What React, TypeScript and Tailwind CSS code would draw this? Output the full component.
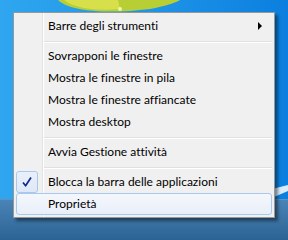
import React from "react";

const font = { fontFamily: 'Lato, "Noto Sans", "Liberation Sans", sans-serif' };

function Sep() {
  return (
    <div className="h-[8px] pl-[28px] pt-[4px]">
      <div className="h-px bg-[#e0e0e0]" />
      <div className="h-px bg-white" />
    </div>
  );
}

function Item({ label, arrow, checked, hover }: { label: string; arrow?: boolean; checked?: boolean; hover?: boolean }) {
  return (
    <div
      className={
        "relative flex h-[22px] items-center pl-[32px] text-[12px] text-black [font-variant-ligatures:none] " +
        (hover ? "rounded-[3px] border border-[#a9c8f0] bg-gradient-to-b from-[#f4f7fc] to-[#e9eff9]" : "")
      }
      style={hover ? { paddingLeft: 31 } : undefined}
    >
      {checked && (
        <div className="absolute left-0 top-0 flex h-[22px] w-[22px] items-center justify-center rounded-[3px] border border-[#a9c8f0] bg-gradient-to-b from-[#eaf0fa] to-[#dfe8f6]">
          <svg width="12" height="12" viewBox="0 0 12 12">
            <path d="M2 6.5 L4.6 9.8 L10 1.5" fill="none" stroke="#0f2a8e" strokeWidth="1.7" strokeLinejoin="round" />
          </svg>
        </div>
      )}
      <span className="leading-none">{label}</span>
      {arrow && (
        <svg className="absolute right-[10px] top-[7px]" width="4" height="8" viewBox="0 0 4 8">
          <path d="M0 0 L4 4 L0 8 Z" fill="#000" />
        </svg>
      )}
    </div>
  );
}

export default function App() {
  return (
    <div className="relative h-[240px] w-[288px] overflow-hidden bg-gradient-to-r from-[#2fa6ef] via-[#1f95e8] to-[#0b7fdf]" style={font}>
      <div className="flex h-full flex-col">
        <div className="flex-1" />
        <div className="h-[41px] border-t border-[#5e93c0] bg-gradient-to-b from-[#4a84b6] to-[#2b6394]" />
      </div>
      <svg className="absolute left-0 top-0" width="288" height="20" viewBox="0 0 288 20">
        <path d="M58 0 C70 12 110 14 150 9 C165 6 175 3 180 0 Z" fill="#b7cf34" />
        <path d="M64 0 C75 9 100 11 120 9 L118 0 Z" fill="#d7e04a" />
        <circle cx="120" cy="9" r="2" fill="#f5f5a0" />
      </svg>
      <svg className="absolute right-0 top-[185px]" width="16" height="16" viewBox="0 0 16 16">
        <path d="M0 4 L16 0 L16 6 L2 12 Z" fill="#ffffff" opacity="0.85" />
      </svg>
      <div className="absolute left-[13px] top-[12px] w-[262px] border border-[#979797] bg-[#f0f0f0] p-[2px] shadow-[3px_3px_3px_rgba(0,0,0,0.45)]">
        <div className="absolute bottom-0 left-[28px] top-0 w-px bg-[#e2e3e3]" />
        <div className="absolute bottom-0 left-[29px] top-0 w-px bg-white" />
        <div className="relative flex flex-col">
          <Item label="Barre degli strumenti" arrow />
          <Sep />
          <Item label="Sovrapponi le finestre" />
          <Item label="Mostra le finestre in pila" />
          <Item label="Mostra le finestre affiancate" />
          <Item label="Mostra desktop" />
          <Sep />
          <Item label="Avvia Gestione attività" />
          <Sep />
          <Item label="Blocca la barra delle applicazioni" checked />
          <Item label="Proprietà" hover />
        </div>
      </div>
    </div>
  );
}
